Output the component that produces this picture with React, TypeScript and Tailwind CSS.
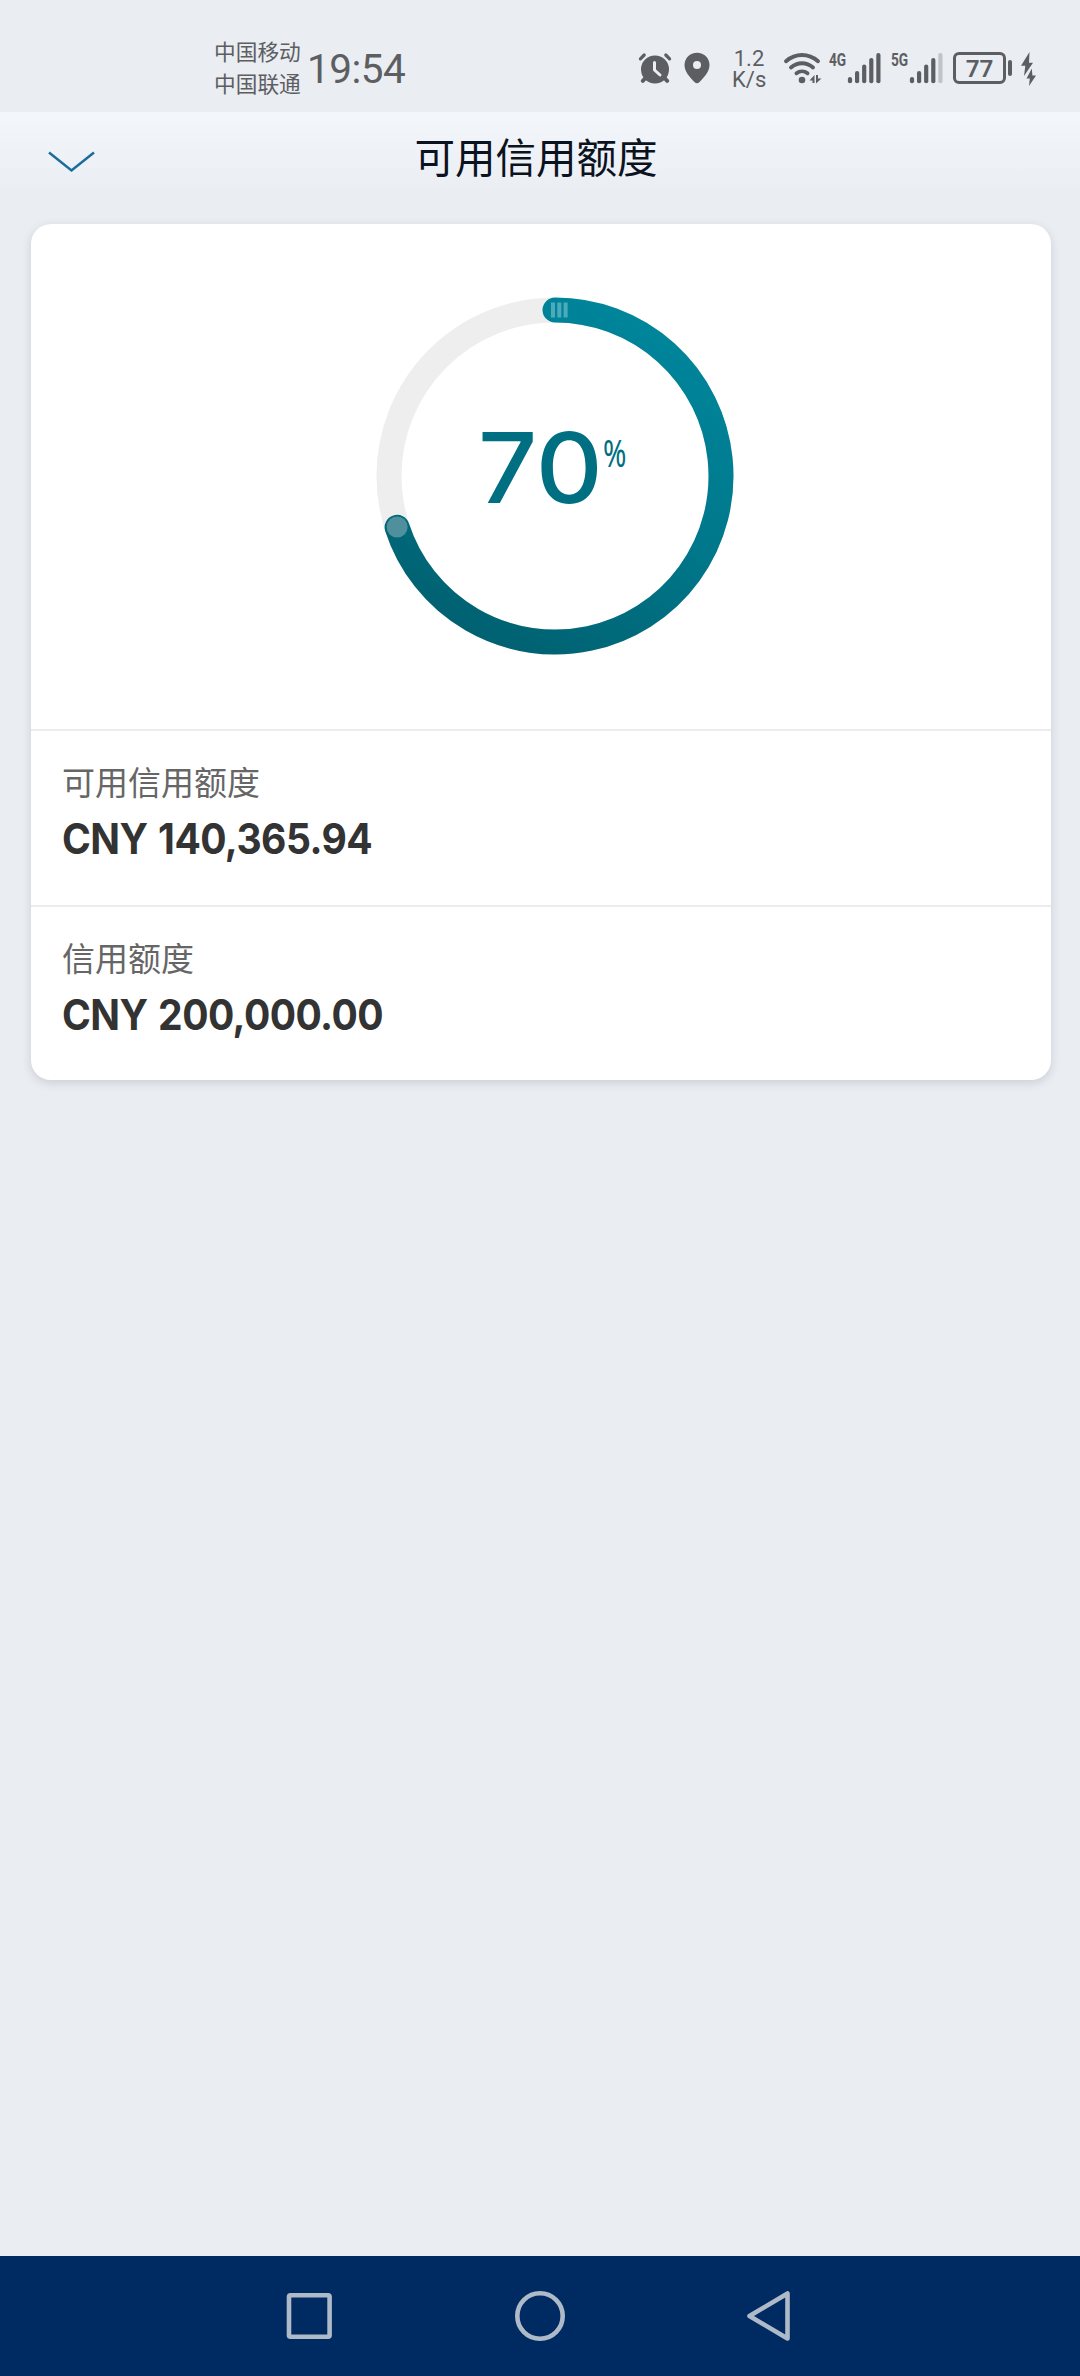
import React from 'react';

type SignalProps = {
  label: string;
  weakLast?: boolean;
};

type AmountRowProps = {
  label: string;
  amount: string;
};

const signalTops = [79, 73, 66.5, 60, 55];

const AlarmIcon = () => (
  <svg className="block w-[34px] h-8 shrink-0" viewBox="0 0 34 32" fill="none">
    <path d="M7.500 26 4.800 28.900M26.500 26l2.700 2.900" stroke="#5c5e62" strokeWidth="4" strokeLinecap="round" />
    <circle cx="17" cy="17.500" r="14" fill="#5c5e62" />
    <path d="M16.500 10.500V18l5.500 5" stroke="#ebeef3" strokeWidth="3" strokeLinecap="round" strokeLinejoin="round" />
    <path d="M2.400 6.800 6.200 3M31.600 6.800 27.800 3" stroke="#5c5e62" strokeWidth="3.200" strokeLinecap="round" />
  </svg>
);

const PinIcon = () => (
  <svg className="block w-[26px] h-8 ml-3 shrink-0" viewBox="0 0 26 32">
    <path
      d="M13 .8C6 .8.5 6.200.5 13c0 7 5.700 12.600 10.200 17.300 1.500 1.400 3.100 1.400 4.600 0C19.800 25.600 25.500 20 25.500 13 25.500 6.200 20 .8 13 .8Z"
      fill="#5c5e62"
    />
    <circle cx="13" cy="13" r="4" fill="#ebeef3" />
  </svg>
);

const WifiIcon = () => (
  <svg className="block w-10 h-8 ml-[17px] shrink-0" viewBox="0 0 40 32" fill="none">
    <g stroke="#5c5e62" strokeWidth="3.900" strokeLinecap="round">
      <path d="M3 9.200C12.500 1 25.500 1 35 9.200" />
      <path d="M8 15.400C14.500 9.800 23.500 9.800 30 15.400" />
      <path d="M13.500 21.200C16.700 18.700 21.300 18.700 24.500 21.200" />
    </g>
    <circle cx="19" cy="28" r="3.300" fill="#5c5e62" />
    <path d="M26.500 28.500 31.500 23v8h-2v-2.500zM38.500 26.500 33 31.500V23h2v3.500z" fill="#5c5e62" />
  </svg>
);

const Signal: React.FC<SignalProps> = ({ label, weakLast }) => (
  <div className="flex shrink-0">
    <span className="w-[18px] h-4 font-['Roboto',sans-serif] text-[19px] leading-[16px] font-bold">
      <span className="block origin-left scale-x-[0.72]">{label}</span>
    </span>
    <svg className="block w-[34px] h-8" viewBox="0 0 34 32">
      {signalTops.map((top, i) => (
        <line
          key={top}
          x1={3 + i * 7.1}
          x2={3 + i * 7.1}
          y1={top - 52}
          y2={29.2}
          stroke={weakLast && i === 4 ? '#c0c3c8' : '#5c5e62'}
          strokeWidth="4.200"
          strokeLinecap="round"
        />
      ))}
    </svg>
  </div>
);

const StatusBar = () => (
  <div className="flex h-[112px] items-start pl-[214px] text-[#5c5e62]">
    <div className="mt-[35px] w-[88px] shrink-0 whitespace-nowrap font-['Noto_Sans_CJK_SC',sans-serif] text-[21.700px] leading-[32px]">
      <div>中国移动</div>
      <div>中国联通</div>
    </div>
    <div className="mt-[47px] ml-[5px] w-[100px] shrink-0 whitespace-nowrap font-['Roboto',sans-serif] text-[40.500px] leading-[44px] tracking-[-0.5px]">
      19:54
    </div>
    <div className="mt-[52px] ml-[231px] flex items-start">
      <AlarmIcon />
      <PinIcon />
      <div className="-mt-[4px] ml-[22px] w-[34px] whitespace-nowrap text-center font-['Roboto',sans-serif] text-[22px] leading-[21px]">
        <div>1.2</div>
        <div>K/s</div>
      </div>
      <WifiIcon />
      <div className="ml-[6px] flex gap-[10px]">
        <Signal label="4G" />
        <Signal label="5G" weakLast />
      </div>
      <div className="ml-[10px] flex items-center">
        <div className="flex h-8 w-[53px] items-center justify-center rounded-[6px] border-[3px] border-[#5c5e62] font-['Noto_Sans',sans-serif] text-[24px] font-semibold leading-none">
          77
        </div>
        <div className="ml-[2px] h-4 w-1 rounded-sm bg-[#5c5e62]" />
      </div>
      <svg className="ml-[9px] block h-[34px] w-[15px]" viewBox="0 0 15 34" fill="#5c5e62">
        <path d="M8.500 0 0 13.800h4.300L3 24 12 10.800H8z" />
        <path d="M10.800 16.500 5.500 26.400h3.300L8 34 15 23.600h-3.600z" />
      </svg>
    </div>
  </div>
);

const Header = () => (
  <header className="relative flex h-[82px] items-start justify-center bg-linear-to-b from-[#f3f6fa] to-[#eaedf2]">
    <svg className="absolute left-[47px] top-[38px] h-6 w-[50px]" viewBox="0 0 50 24" fill="none">
      <path d="M2 2.500 24.500 20.500 47 2.500" stroke="#1a6c9c" strokeWidth="2.500" />
    </svg>
    <h1 className="mt-[14px] -ml-[8px] font-['Noto_Sans_CJK_SC',sans-serif] text-[40.500px] leading-[60px] text-[#0b1220]">
      可用信用额度
    </h1>
  </header>
);

const Gauge = () => (
  <div className="relative flex h-[505px] justify-center pt-[73px] pl-[27px]">
    <svg className="h-[358px] w-[358px]" viewBox="0 0 358 358" fill="none">
      <defs>
        <linearGradient id="arc" gradientUnits="userSpaceOnUse" x1="250" y1="0" x2="70" y2="330">
          <stop offset="0" stopColor="#00869c" />
          <stop offset="0.500" stopColor="#00778a" />
          <stop offset="1" stopColor="#006070" />
        </linearGradient>
      </defs>
      <circle cx="179" cy="179" r="166" stroke="#eeeeee" strokeWidth="25" />
      <path d="M179 13A166 166 0 1 1 21.120 230.300" stroke="url(#arc)" strokeWidth="25" strokeLinecap="round" />
      <circle cx="21.120" cy="230" r="10.500" fill="#4f909c" />
      <path d="M177 5.500v15M183.300 5.500v15M189.600 5.500v15" stroke="#4daabb" strokeWidth="4" />
    </svg>
    <div className="absolute left-[447px] top-[183px] flex items-start text-[#006f82]">
      <span className="w-[125px] origin-left scale-x-[1.060] font-['Inter',sans-serif] text-[98px] font-medium leading-[122px]">70</span>
      <span className="mt-[15px] w-6 origin-left scale-x-[0.740] font-['Noto_Sans',sans-serif] text-[38px] leading-[60px]">%</span>
    </div>
  </div>
);

const AmountRow: React.FC<AmountRowProps> = ({ label, amount }) => (
  <div className="h-[176px] border-t-2 border-[#ebecee] px-[31px] pt-[26px]">
    <div className="font-['Noto_Sans_CJK_SC',sans-serif] text-[33px] leading-[48px] text-[#666666]">{label}</div>
    <div className="mt-[8px] origin-left scale-x-[0.930] whitespace-nowrap font-['Inter',sans-serif] text-[42px] font-bold leading-[52px] tracking-[-0.6px] [word-spacing:2px] text-[#333333]">
      {amount}
    </div>
  </div>
);

const NavBar = () => (
  <nav className="h-[120px] bg-[#002a62]">
    <svg className="block h-[120px] w-[1080px]" viewBox="0 0 1080 120" fill="none" stroke="#afbac8" strokeWidth="4.600" strokeLinejoin="round">
      <rect x="289" y="39.300" width="40.600" height="41.500" rx="1.500" />
      <circle cx="540" cy="60" r="22.700" />
      <path d="M749.500 60 787.500 37.500v45z" />
    </svg>
  </nav>
);

const App = () => {
  return (
    <div className="flex h-[2376px] w-[1080px] flex-col overflow-hidden bg-[#eaedf2]">
      <StatusBar />
      <Header />
      <main className="flex-1 pt-[30px] pl-[31px]">
        <section className="w-[1020px] h-[856px] rounded-[20px] bg-white shadow-[0_3px_10px_rgba(60,80,90,0.180)]">
          <Gauge />
          <AmountRow label="可用信用额度" amount="CNY 140,365.94" />
          <AmountRow label="信用额度" amount="CNY 200,000.00" />
        </section>
      </main>
      <NavBar />
    </div>
  );
};

export default App;
